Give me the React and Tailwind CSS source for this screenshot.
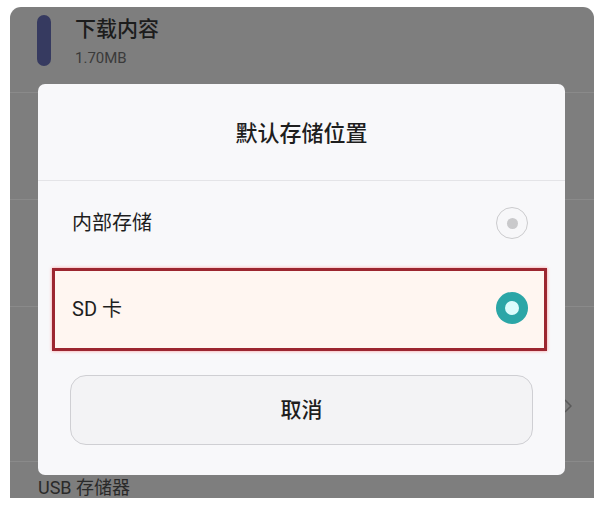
import React from 'react';

function Radio({ checked }) {
  if (checked) {
    return (
      <span className="flex h-8 w-8 items-center justify-center rounded-full bg-[#2ba6a7]">
        <span className="h-[14px] w-[14px] rounded-full bg-[#dcfcfc]" />
      </span>
    );
  }
  return (
    <span className="flex h-8 w-8 items-center justify-center rounded-full border-[1.5px] border-[#cbcbcd] bg-[#f7f7f9]">
      <span className="h-[11px] w-[11px] rounded-full bg-[#c9c9cb]" />
    </span>
  );
}

export default function App() {
  return (
    <div className="h-[507px] w-[607px] bg-white pl-[10px] pt-[7px] font-['Roboto','Noto_Sans_CJK_SC',sans-serif]">
      <div className="relative h-[491px] w-[584px] overflow-hidden rounded-t-[11px] bg-[#7e7e7e]">
        {/* list behind the dim overlay */}
        <div className="flex h-[86px] items-start gap-[24px] border-b border-[#8a8a8a] pl-[27px] pt-[8px]">
          <span className="h-[51px] w-[14px] rounded-full bg-[#363a60]" />
          <div className="flex flex-col">
            <span className="text-[21px] font-medium leading-[28px] text-[#1c1c1c]">下载内容</span>
            <span className="mt-[6px] text-[15px] leading-[18px] text-[#3a3a3a]">1.70MB</span>
          </div>
        </div>
        <div className="h-[107px] border-b border-[#8a8a8a]" />
        <div className="h-[107px] border-b border-[#8a8a8a]" />
        <div className="flex h-[155px] justify-end border-b border-[#8a8a8a] pr-[22px] pt-[92px]">
          <svg width="8" height="14" viewBox="0 0 8 14" fill="none">
            <path d="M1 1l6 6-6 6" stroke="#5a5a5a" strokeWidth="1.5" />
          </svg>
        </div>
        <div className="pl-[28px] pt-[15px] text-[18px] leading-[22px] text-[#2a2a2a]">USB 存储器</div>

        {/* dialog */}
        <div className="absolute left-[28px] top-[77px] flex h-[391px] w-[527px] flex-col rounded-[7px] bg-[#f8f8fa]">
          <div className="flex h-[97px] items-center justify-center border-b border-[#e4e4e7] pt-[2px] text-[22px] font-medium text-[#1e1e1e]">
            默认存储位置
          </div>
          <div className="flex h-[87px] items-center justify-between pb-[3px] pl-[34px] pr-[37px] text-[20px] text-[#1e1e1e]">
            <span>内部存储</span>
            <Radio checked={false} />
          </div>
          <div className="ml-[14px] mr-[18px] flex h-[83px] items-center justify-between border-[3px] border-[#9c2630] bg-[#fff6f1] pb-[4px] pl-[17px] pr-[16px] text-[20px] text-[#1e1e1e] shadow-[0_0_3px_rgba(255,90,90,0.6)]">
            <span className="pt-[2px]">SD 卡</span>
            <Radio checked />
          </div>
          <div className="mx-[32px] mt-[24px] flex h-[70px] items-center justify-center rounded-[16px] border border-[#cfcfd3] bg-[#f3f3f5] pt-[2px] text-[21px] font-medium text-[#1e1e1e]">
            取消
          </div>
        </div>
      </div>
    </div>
  );
}
